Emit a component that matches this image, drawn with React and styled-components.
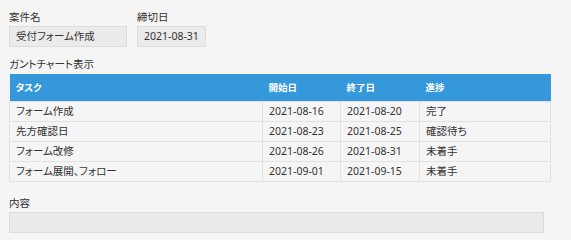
import React from "react";
import styled, { createGlobalStyle } from "styled-components";

const Global = createGlobalStyle`
  html, body { margin: 0; padding: 0; background: #f5f5f5; }
  body {
    font-family: "Noto Sans", "Noto Sans CJK JP", sans-serif;
    font-size: 10.5px;
    color: #333;
    font-feature-settings: "palt";
  }
`;

const Page = styled.div`
  padding: 10px 0 0 9px;
  width: 541px;
`;

const TopRow = styled.div`
  display: flex;
  gap: 10px;
`;

const Field = styled.div`
  display: flex;
  flex-direction: column;
  gap: 2px;
`;

const Label = styled.div`
  line-height: 14px;
  height: 14px;
  color: #333;
`;

const Box = styled.div`
  box-sizing: border-box;
  height: 21px;
  line-height: 19px;
  padding: 0 ${(p) => (p.$pad ? p.$pad : 6)}px;
  background: #ebebeb;
  border: 1px solid #dcdcdc;
  width: ${(p) => (p.$width ? `${p.$width}px` : "auto")};
  color: #333;
  white-space: nowrap;
`;

const SectionTitle = styled.div`
  margin-top: 10px;
  line-height: 14px;
  height: 14px;
`;

const Table = styled.table`
  margin-top: 3px;
  border-collapse: collapse;
  width: 541px;
  table-layout: fixed;
`;

const Th = styled.th`
  background: #3498db;
  color: #fff;
  font-weight: bold;
  font-size: 9.5px;
  text-align: left;
  height: 27px;
  padding: 0 6px;
  box-sizing: border-box;
  border: none;
`;

const Td = styled.td`
  height: 20px;
  padding: 0 6px;
  box-sizing: border-box;
  border: 1px solid #e2e2e2;
  line-height: 18px;
  white-space: nowrap;
`;

const BottomLabel = styled(Label)`
  margin-top: 14px;
`;

const rows = [
  ["フォーム作成", "2021-08-16", "2021-08-20", "完了"],
  ["先方確認日", "2021-08-23", "2021-08-25", "確認待ち"],
  ["フォーム改修", "2021-08-26", "2021-08-31", "未着手"],
  ["フォーム展開、フォロー", "2021-09-01", "2021-09-15", "未着手"],
];

export default function App() {
  return (
    <>
      <Global />
      <Page>
        <TopRow>
          <Field>
            <Label>案件名</Label>
            <Box $width={118} $pad={6}>受付フォーム作成</Box>
          </Field>
          <Field>
            <Label>締切日</Label>
            <Box>2021-08-31</Box>
          </Field>
        </TopRow>
        <SectionTitle>ガントチャート表示</SectionTitle>
        <Table>
          <colgroup>
            <col style={{ width: 253 }} />
            <col style={{ width: 78 }} />
            <col style={{ width: 79 }} />
            <col style={{ width: 131 }} />
          </colgroup>
          <thead>
            <tr>
              <Th>タスク</Th>
              <Th>開始日</Th>
              <Th>終了日</Th>
              <Th>進捗</Th>
            </tr>
          </thead>
          <tbody>
            {rows.map((r) => (
              <tr key={r[0]}>
                {r.map((c, i) => (
                  <Td key={i}>{c}</Td>
                ))}
              </tr>
            ))}
          </tbody>
        </Table>
        <Field>
          <BottomLabel>内容</BottomLabel>
          <Box $width={535} />
        </Field>
      </Page>
    </>
  );
}
